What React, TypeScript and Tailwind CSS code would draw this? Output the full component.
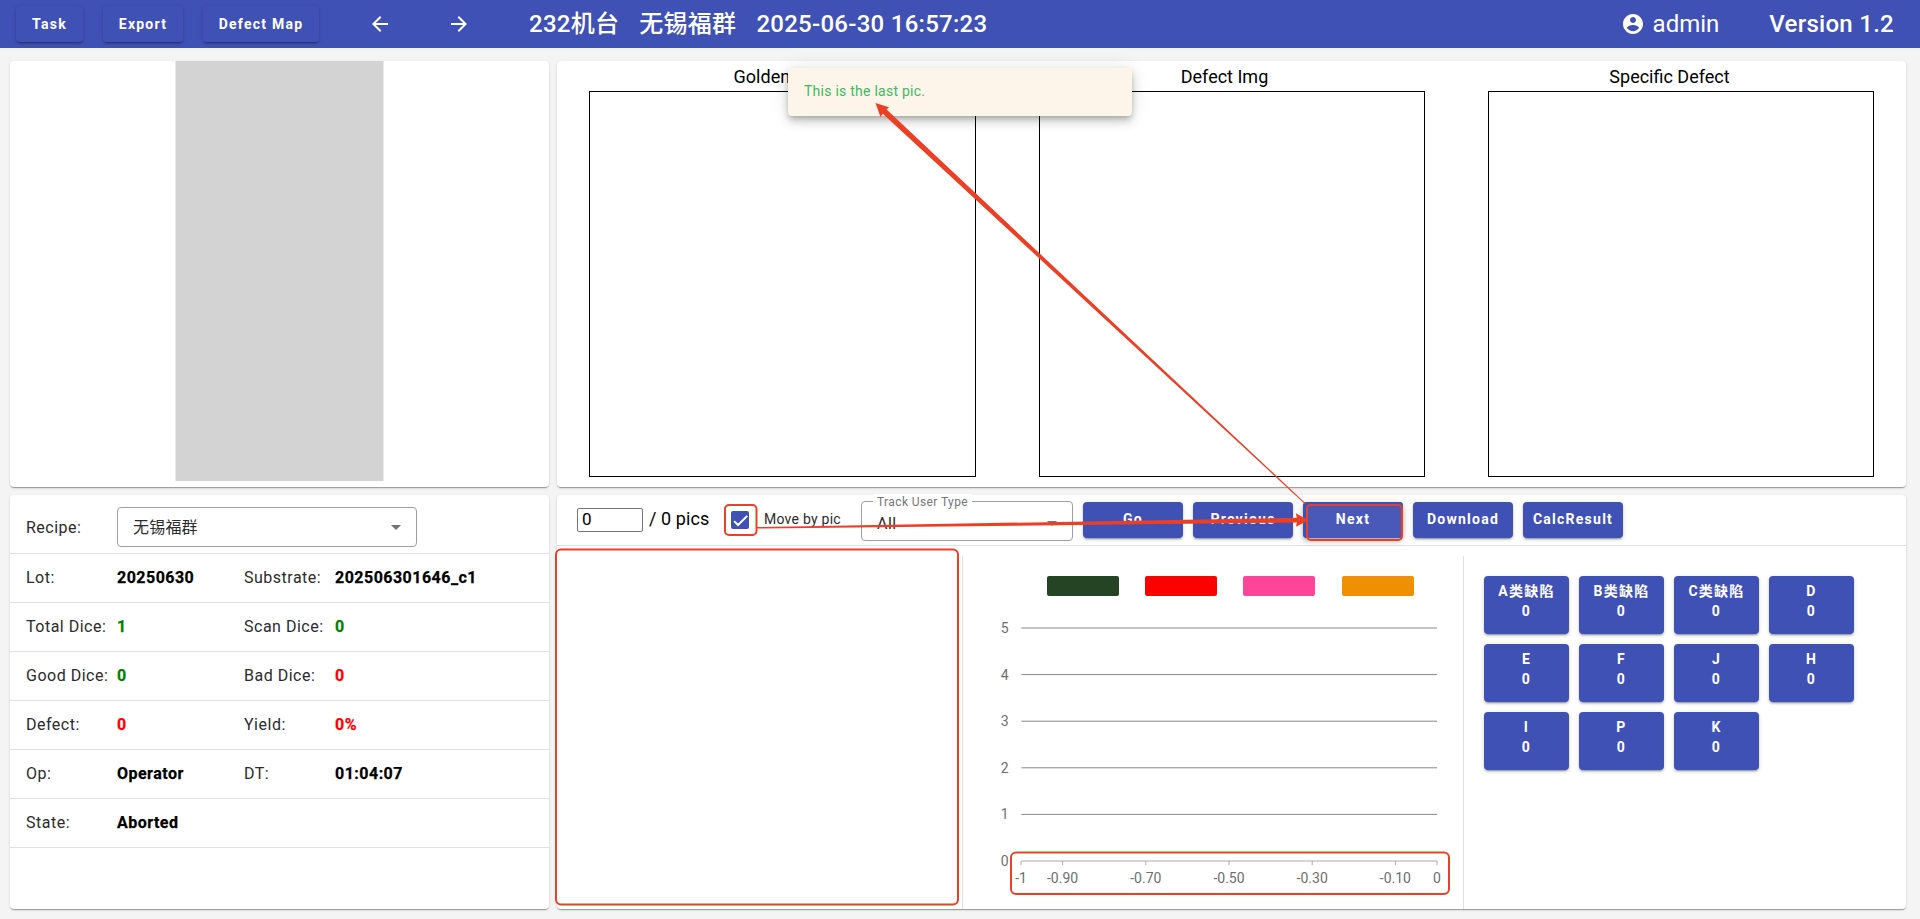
import React from "react";

const FONT = "font-['Roboto','Noto_Sans_CJK_SC',sans-serif]";
const CARD =
  "rounded bg-white shadow-[0_2px_1px_-1px_rgba(0,0,0,0.2),0_1px_1px_0_rgba(0,0,0,0.14),0_1px_3px_0_rgba(0,0,0,0.12)]";
const RAISED =
  "rounded bg-[#3f51b5] text-sm font-bold tracking-[1.25px] text-white shadow-[0_3px_1px_-2px_rgba(0,0,0,0.2),0_2px_2px_0_rgba(0,0,0,0.14),0_1px_5px_0_rgba(0,0,0,0.12)]";

function Icon({ d }: { d: string }) {
  return (
    <svg viewBox="0 0 24 24" className="size-6 shrink-0 fill-current">
      <path d={d} />
    </svg>
  );
}

function Header() {
  return (
    <header className="flex h-12 shrink-0 items-center bg-[#3f51b5] pl-4 text-2xl text-white">
      <div className="flex gap-5">
        <button className={`${RAISED} h-9 w-[67px] pb-px`}>Task</button>
        <button className={`${RAISED} h-9 w-20 pb-px`}>Export</button>
        <button className={`${RAISED} h-9 w-[116px] pb-px`}>Defect Map</button>
      </div>
      <div className="ml-[49px] flex gap-[55px]">
        <Icon d="M20 11H7.83l5.59-5.59L12 4l-8 8 8 8 1.41-1.41L7.83 13H20v-2z" />
        <Icon d="M12 4l-1.41 1.41L16.17 11H4v2h12.17l-5.58 5.59L12 20l8-8z" />
      </div>
      <div className="ml-[58px] flex gap-5 font-medium tracking-[0.27px] whitespace-nowrap">
        <span>232机台</span>
        <span>无锡福群</span>
        <span>2025-06-30 16:57:23</span>
      </div>
      <div className="ml-auto flex items-center gap-2 pr-[50px]">
        <Icon d="M12 2C6.48 2 2 6.48 2 12s4.48 10 10 10 10-4.48 10-10S17.52 2 12 2zm0 3c1.66 0 3 1.34 3 3s-1.34 3-3 3-3-1.34-3-3 1.34-3 3-3zm0 14.2c-2.5 0-4.71-1.28-6-3.22.03-1.99 4-3.08 6-3.08 1.99 0 5.97 1.09 6 3.08-1.29 1.94-3.5 3.22-6 3.22z" />
        <span>admin</span>
      </div>
      <span className="pr-[26px] font-medium tracking-[0.27px]">Version 1.2</span>
    </header>
  );
}

type Cell = [string, string, string];
const rows: Cell[][] = [
  [["Lot:", "20250630", "text-black"], ["Substrate:", "202506301646_c1", "text-black"]],
  [["Total Dice:", "1", "text-[#008000]"], ["Scan Dice:", "0", "text-[#008000]"]],
  [["Good Dice:", "0", "text-[#008000]"], ["Bad Dice:", "0", "text-[#ff0000]"]],
  [["Defect:", "0", "text-[#ff0000]"], ["Yield:", "0%", "text-[#ff0000]"]],
  [["Op:", "Operator", "text-black"], ["DT:", "01:04:07", "text-black"]],
  [["State:", "Aborted", "text-black"]],
];

function Caret() {
  return (
    <svg viewBox="0 0 10 5" className="h-[5px] w-2.5 fill-[#757575]">
      <path d="M0 0l5 5 5-5z" />
    </svg>
  );
}

function LotInfo() {
  return (
    <section className={`${CARD} h-[414px] text-base text-[#2b2b2b]`}>
      <div className="flex h-[59px] items-center border-b border-[#e0e0e0] pt-[5px] pl-4">
        <span className="w-[91px] pt-0.5 tracking-[0.5px]">Recipe:</span>
        <div className="flex h-10 w-[300px] items-center justify-between rounded border border-[#9e9e9e] pt-0.5 pr-[15px] pl-[15px]">
          <span className="tracking-[0.2px]">无锡福群</span>
          <Caret />
        </div>
      </div>
      {rows.map((row, i) => (
        <div key={i} className="flex h-[49px] items-center border-b border-[#e0e0e0] pl-4">
          {row.map(([label, value, color]) => (
            <div key={label} className="flex w-[218px]">
              <span className="w-[91px] shrink-0 tracking-[0.5px]">{label}</span>
              <span className={`font-bold tracking-[0.48px] whitespace-nowrap [-webkit-text-stroke:0.25px] ${color}`}>
                {value}
              </span>
            </div>
          ))}
        </div>
      ))}
    </section>
  );
}

function Images() {
  return (
    <section className={`${CARD} h-[426px]`}>
      <div className="grid h-[30px] w-[1335px] grid-cols-3 items-center pt-px text-center text-lg leading-6 text-black">
        <span>Golden Img</span>
        <span>Defect Img</span>
        <span>Specific Defect</span>
      </div>
      <div className="grid grid-cols-3 justify-items-center pl-[0.6px]">
        <div className="h-[386px] w-[386.4px] border border-black" />
        <div className="h-[386px] w-[386.4px] border border-black" />
        <div className="h-[386px] w-[386.4px] border border-black" />
      </div>
    </section>
  );
}

function Toolbar() {
  return (
    <div className="flex h-[51px] items-start border-b border-[#e0e0e0] pl-5">
      <div className="mt-[13px] flex h-6 w-[66px] items-center rounded-xs border border-[#767676] pb-px pl-1 text-[17px] text-black">
        0
      </div>
      <span className="mt-2.5 ml-[6px] w-[76px] text-lg leading-7 tracking-[0.1px] text-black">/ 0 pics</span>
      <div className="mt-4 ml-[6px] flex size-[18px] items-center justify-center rounded-xs bg-[#3f51b5]">
        <svg viewBox="0 0 24 24" className="size-[15px] fill-none stroke-white stroke-[3.12]">
          <path d="M1.73 12.91 8.1 19.28 22.79 4.59" />
        </svg>
      </div>
      <span className="mt-[14px] ml-[15px] w-[97px] text-sm leading-5 tracking-[0.25px] text-[#2b2b2b]">Move by pic</span>
      <div className="relative mt-1.5 flex h-10 w-[212px] items-center justify-between rounded border border-[#9e9e9e] px-[15px] pt-1 text-base text-[#2b2b2b]">
        <span className="absolute -top-2 left-[11px] bg-white px-1 text-xs leading-4 tracking-[0.4px] text-[#757575]">
          Track User Type
        </span>
        <span className="pt-px tracking-[0.5px]">All</span>
        <Caret />
      </div>
      <div className="mt-[7px] ml-[10px] flex gap-2.5">
        <button className={`${RAISED} h-9 w-[100px] pb-0.5`}>Go</button>
        <button className={`${RAISED} h-9 w-[100px] pb-0.5`}>Previous</button>
        <button className="h-9 w-[100px] rounded bg-[#4959b9] pb-0.5 text-sm font-bold tracking-[1.25px] text-white shadow-[inset_3px_2px_0_0_#3f51b5,inset_-1px_0_0_0_#3f51b5,0_2px_4px_-1px_rgba(0,0,0,0.2),0_4px_5px_0_rgba(0,0,0,0.14),0_1px_10px_0_rgba(0,0,0,0.12)]">
          Next
        </button>
        <button className={`${RAISED} h-9 w-[100px] pb-0.5`}>Download</button>
        <button className={`${RAISED} h-9 w-[100px] pb-0.5`}>CalcResult</button>
      </div>
    </div>
  );
}

const yTicks = [5, 4, 3, 2, 1, 0];
const xTicks: [string, number][] = [
  ["-1", 59],
  ["-0.90", 100.6],
  ["-0.70", 183.8],
  ["-0.50", 267],
  ["-0.30", 350.2],
  ["-0.10", 433.4],
  ["0", 475],
];

function Chart() {
  return (
    <div className="mt-2.5 w-[502px] border-x border-[#e0e0e0] pt-5">
      <div className="flex gap-[26px] pl-[84px]">
        <i className="h-5 w-[72px] rounded-xs bg-[#244424]" />
        <i className="h-5 w-[72px] rounded-xs bg-[#ff0000]" />
        <i className="h-5 w-[72px] rounded-xs bg-[#ff4499]" />
        <i className="ml-px h-5 w-[72px] rounded-xs bg-[#ef9000]" />
      </div>
      <svg width="499" height="310" viewBox="0 0 499 310" className="block fill-[#6e6e6e] text-sm">
        {yTicks.map((t, i) => {
          const y = 32 + i * 46.6;
          return (
            <g key={t}>
              <line x1="58.4" x2="474" y1={y} y2={y} className={t ? "stroke-[#888888]" : "stroke-[#aaaaaa]"} />
              <text x="45.5" y={y + 5} textAnchor="end">
                {t}
              </text>
            </g>
          );
        })}
        {xTicks.map(([t, x]) => (
          <g key={t}>
            <line x1={x - 1} x2={x - 1} y1="265" y2="269" className="stroke-[#aaaaaa]" />
            <text x={x - 1} y="286.8" textAnchor="middle">
              {t}
            </text>
          </g>
        ))}
      </svg>
    </div>
  );
}

const classes = ["A类缺陷", "B类缺陷", "C类缺陷", "D", "E", "F", "J", "H", "I", "P", "K"];

function Annotations() {
  return (
    <svg
      viewBox="0 0 1920 919"
      className="pointer-events-none absolute top-0 left-0 h-[919px] w-[1920px] fill-none stroke-[#eb4025] stroke-2"
    >
      <rect x="725" y="505" width="31.5" height="30" rx="4" />
      <rect x="1307" y="505" width="95" height="35" rx="4" />
      <rect x="556" y="549.5" width="402" height="355" rx="5" />
      <rect x="1011" y="852.5" width="438" height="41.5" rx="5" />
      <g className="fill-[#eb4025] stroke-none">
        <path d="M875.5 103 889 107.2 886.6 109.6 1306 503.7 1305.3 504.4 882.8 113.8 880.5 117z" />
        <path d="M1308.5 520.2 1295.8 513.3 1296.8 517.8 1060 521.9 757 527 757 528.6 1060 525.2 1296.8 522.6 1296 526.8z" />
      </g>
    </svg>
  );
}

export default function App() {
  return (
    <div className={`${FONT} relative flex h-[919px] w-[1920px] flex-col overflow-hidden bg-[#f4f4f4]`}>
      <Header />
      <main className="flex gap-2 pt-[13px] pl-2.5">
        <div className="flex w-[539px] flex-col gap-2">
          <section className={`${CARD} flex h-[426px] justify-center`}>
            <div className="h-[420px] w-[209px] border-x border-[#e9e9e9] bg-[#d3d3d3]" />
          </section>
          <LotInfo />
        </div>
        <div className="flex w-[1349px] flex-col gap-2">
          <Images />
          <section className={`${CARD} flex h-[414px] flex-col`}>
            <Toolbar />
            <div className="flex min-h-0 flex-1">
              <div className="w-[405px]" />
              <Chart />
              <div className="grid auto-rows-[58px] grid-cols-[repeat(4,85px)] content-start gap-2.5 pt-[30px] pl-5">
                {classes.map((c) => (
                  <button key={c} className={`${RAISED} flex flex-col items-center pt-[5px] leading-5`}>
                    <span>{c}</span>
                    <span>0</span>
                  </button>
                ))}
              </div>
            </div>
          </section>
        </div>
      </main>
      <div className="absolute top-[68px] left-[788px] flex h-12 w-[344px] items-center rounded bg-[#fdf5ea] px-4 pb-0.5 text-sm tracking-[0.25px] text-[#3dba5f] shadow-[0_3px_5px_-1px_rgba(0,0,0,0.2),0_6px_10px_0_rgba(0,0,0,0.14),0_1px_18px_0_rgba(0,0,0,0.12)]">
        This is the last pic.
      </div>
      <Annotations />
    </div>
  );
}
